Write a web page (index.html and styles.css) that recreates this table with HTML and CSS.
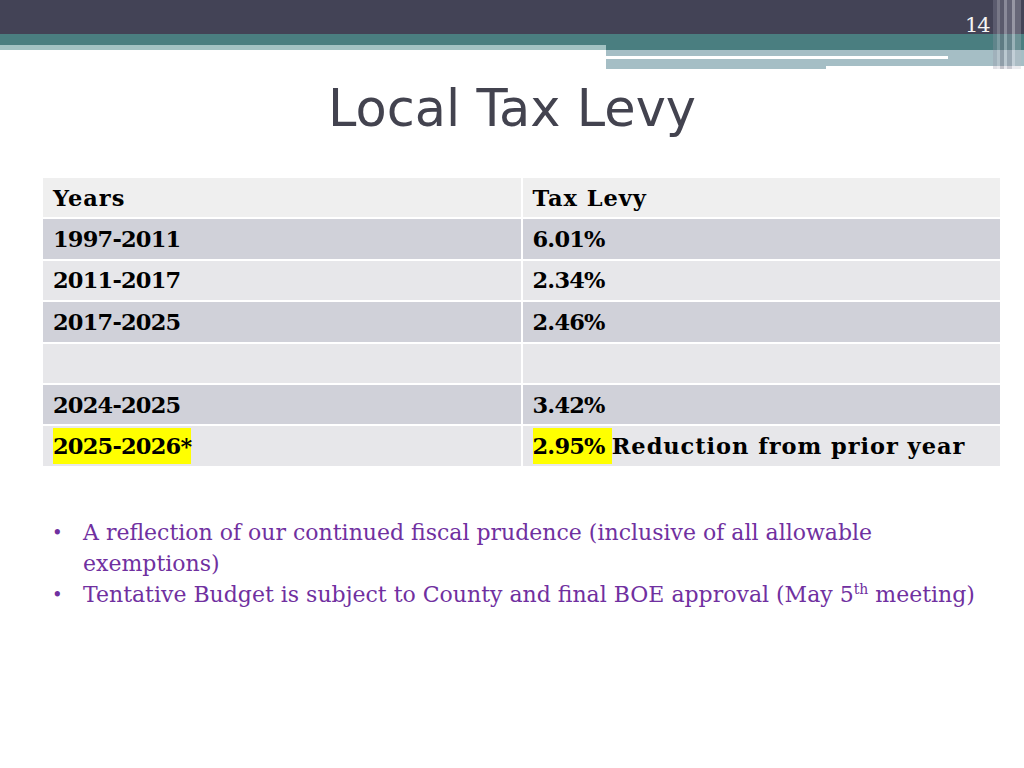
FILE: index.html
```html
<!DOCTYPE html>
<html>
<head>
<meta charset="utf-8">
<link rel="stylesheet" href="styles.css">
</head>
<body>
<div class="slide">
  <header class="banner">
    <div class="dark"></div>
    <div class="bands">
      <div class="band-left">
        <div class="teal-l"></div>
        <div class="pale-l"></div>
      </div>
      <div class="band-right">
        <div class="teal-r"></div>
        <div class="pale-r1"></div>
        <div class="line-row"><div class="white-line"></div><div class="pale-fill"></div></div>
        <div class="pale-r2"></div>
        <div class="tail-row"><div class="pale-tail"></div></div>
      </div>
    </div>
    <div class="stripes">
      <span class="s1"></span><span class="s2"></span><span class="s3"></span><span class="s4"></span><span class="s5"></span><span class="s6"></span><span class="s7"></span>
    </div>
    <div class="page-num">14</div>
  </header>

  <h1 class="title">Local Tax Levy</h1>

  <table class="levy">
    <tr class="head"><td><span class="word">Years</span></td><td><span class="word">Tax Levy</span></td></tr>
    <tr class="dk"><td><span class="num">1997-2011</span></td><td><span class="num">6.01%</span></td></tr>
    <tr class="lt"><td><span class="num">2011-2017</span></td><td><span class="num">2.34%</span></td></tr>
    <tr class="dk"><td><span class="num">2017-2025</span></td><td><span class="num">2.46%</span></td></tr>
    <tr class="lt"><td></td><td></td></tr>
    <tr class="dk"><td><span class="num">2024-2025</span></td><td><span class="num">3.42%</span></td></tr>
    <tr class="lt"><td><span class="num hl">2025-2026*</span></td><td><span class="num hl">2.95% </span><span class="word">Reduction from prior year</span></td></tr>
  </table>

  <ul class="notes">
    <li>A reflection of our continued fiscal prudence (inclusive of all allowable exemptions)</li>
    <li>Tentative Budget is subject to County and final BOE approval (May 5<sup>th</sup> meeting)</li>
  </ul>
</div>
</body>
</html>
```

FILE: styles.css
```css
html, body {
  margin: 0;
  padding: 0;
  background: #ffffff;
}

.slide {
  width: 1024px;
  height: 768px;
  position: relative;
  overflow: hidden;
  background: #ffffff;
}

/* ---------- banner ---------- */
.banner {
  position: relative;
  height: 69px;
}

.dark {
  height: 34px;
  background: #434356;
}

.bands {
  display: flex;
}

.band-left {
  width: 606px;
}

.teal-l {
  height: 11px;
  background: #4a7e80;
}

.pale-l {
  height: 5px;
  background: #a3c2c3;
}

.band-right {
  flex: 1;
}

.teal-r {
  height: 16px;
  background: #4a7e80;
}

.pale-r1 {
  height: 6px;
  background: #a5bec5;
}

.line-row {
  display: flex;
  height: 3px;
}

.white-line {
  width: 342px;
  background: #ffffff;
}

.pale-fill {
  flex: 1;
  background: #a5bec5;
}

.pale-r2 {
  height: 7px;
  background: #a5bec5;
}

.tail-row {
  height: 3px;
}

.pale-tail {
  width: 220px;
  height: 3px;
  background: #a5bec5;
}

.stripes {
  position: absolute;
  top: 0;
  left: 993px;
  width: 31px;
  height: 69px;
  display: flex;
}

.stripes span {
  display: block;
  height: 100%;
}

.stripes .s1 { width: 4px; background: rgba(150, 150, 165, 0.3); }
.stripes .s2 { width: 3px; background: rgba(200, 200, 210, 0.4); }
.stripes .s3 { width: 4px; background: rgba(120, 120, 135, 0.45); }
.stripes .s4 { width: 3px; background: rgba(210, 210, 220, 0.5); }
.stripes .s5 { width: 5px; background: rgba(140, 140, 155, 0.45); }
.stripes .s6 { width: 3px; background: rgba(220, 220, 230, 0.55); }
.stripes .s7 { width: 6px; background: rgba(190, 190, 200, 0.3); }

.page-num {
  position: absolute;
  left: 965px;
  top: 13px;
  font-family: "DejaVu Serif", serif;
  font-size: 21px;
  color: #f4f4f4;
  letter-spacing: -1px;
}

/* ---------- title ---------- */
.title {
  margin: 0;
  height: 107px;
  text-align: center;
  font-family: "DejaVu Sans", sans-serif;
  font-weight: normal;
  font-size: 51px;
  line-height: 80px;
  color: #43434f;
}

/* ---------- table ---------- */
.levy {
  margin-left: 41px;
  width: 961px;
  border-collapse: separate;
  border-spacing: 2px;
  font-family: "DejaVu Serif", serif;
  font-weight: bold;
  font-size: 22.5px;
  color: #000000;
}

.levy td {
  height: 39.4px;
  padding: 0 0 0 10px;
  vertical-align: middle;
  box-sizing: border-box;
  width: 50%;
}

.levy .head td { background: #efefef; }
.levy .dk td { background: #d0d1d9; }
.levy .lt td { background: #e7e7ea; }

.num {
  letter-spacing: -0.8px;
}

.word {
  letter-spacing: 0.95px;
}

.hl {
  background: #ffff00;
  padding: 5px 0;
}

/* ---------- notes ---------- */
.notes {
  list-style: none;
  margin: 49px 0 0 0;
  padding: 0 30px 0 83px;
  font-family: "DejaVu Serif", serif;
  font-size: 22px;
  line-height: 31px;
  color: #7030a0;
}

.notes li {
  position: relative;
}

.notes li::before {
  content: "\2022";
  position: absolute;
  left: -31px;
  top: 0;
  font-size: 18px;
}

.notes sup {
  font-size: 14px;
  line-height: 0;
}
```
